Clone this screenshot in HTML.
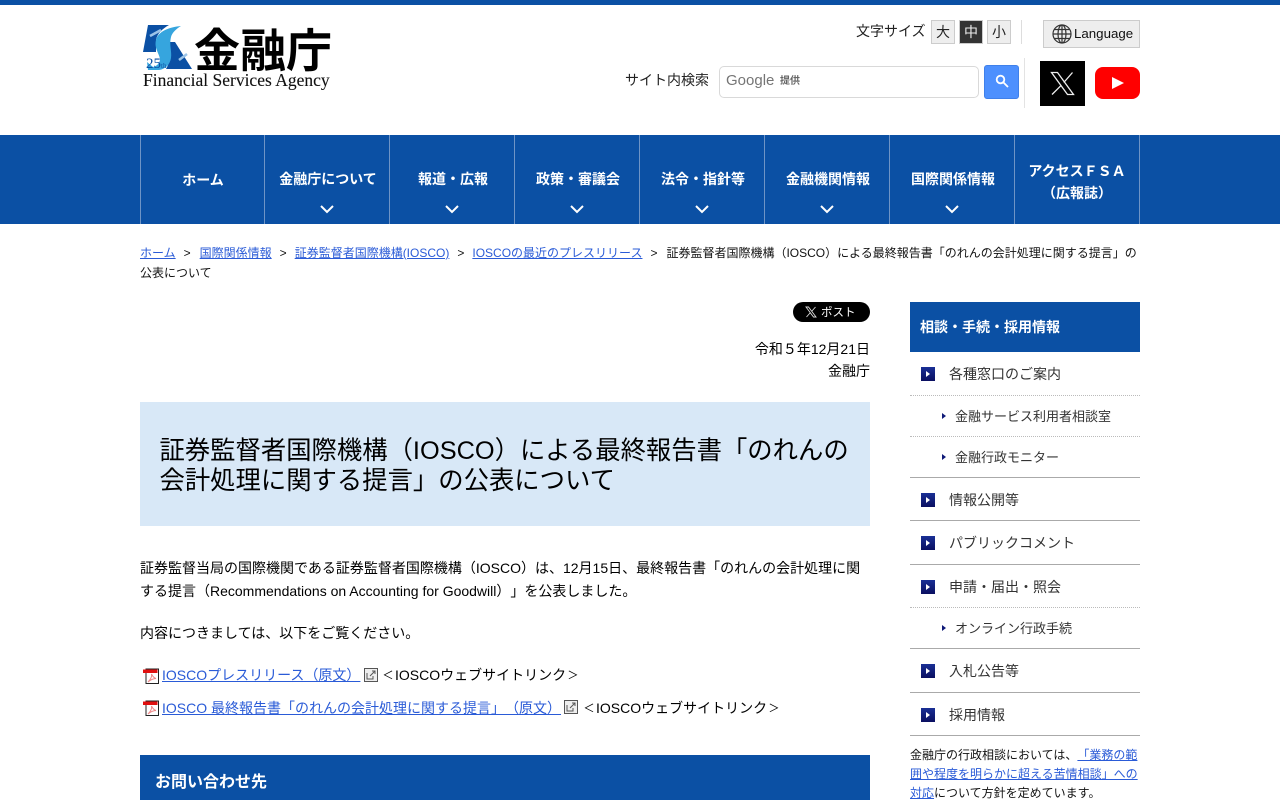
<!DOCTYPE html>
<html lang="ja"><head><meta charset="utf-8"><title>金融庁</title>
<style>
*{box-sizing:border-box}
html,body{margin:0;padding:0;width:1280px;height:800px;overflow:hidden;background:#fff}
body{font-family:"Liberation Sans","Noto Sans CJK JP",sans-serif;font-size:14px;color:#000;position:relative;text-spacing-trim:space-all}
.a{position:absolute;white-space:nowrap}
a{color:#2a5bd7;text-decoration:underline}
.nav{position:absolute;left:0;top:135px;width:1280px;height:89px;background:#0b50a4}
.nv{position:absolute;top:0;height:89px;width:125px;border-left:1px solid #6e94c6;color:#fff;font-weight:bold;font-size:14px;text-align:center}
.nv span{position:absolute;left:1px;right:-1px;top:34px;line-height:20px;white-space:nowrap}
.nv svg{position:absolute;left:55px;top:70px}
.sz{position:absolute;top:20px;width:24px;height:24px;border:1px solid #ccc;background:#eee;text-align:center;line-height:23px;font-size:14px;color:#222}
.side{color:#333;font-size:14px}
.ln{position:absolute;left:910px;width:230px;height:1px}
.sq{position:absolute;left:921px;width:14px;height:14px;background:linear-gradient(#1a2f95,#0a0f60)}
.sq:after{content:"";position:absolute;left:5px;top:4px;border-left:4px solid #fff;border-top:3px solid transparent;border-bottom:3px solid transparent}
.tr{position:absolute;left:942px;border-left:4px solid #101a78;border-top:3px solid transparent;border-bottom:3px solid transparent}
.pdf{position:absolute;left:143px;width:16px;height:16px}
.sep{margin:0 8px}
.nr{display:inline-block;width:14px;text-align:center;transform:scale(.8)}
</style></head><body>
<div class="a" style="left:0;top:0;width:1280px;height:5px;background:#0b50a4"></div>

<svg class="a" style="left:142px;top:25px" width="52" height="46" viewBox="0 0 52 46">
<path d="M6 0H27C20 4 15 9 14 15L14 27H1Z" fill="#0b50a4"/>
<path d="M26 17H33L50 44H24C29 36 29 26 26 17Z" fill="#0b50a4"/>
<path d="M39 1C28 2 16 6 14 15 12 23 17 28 18 34 18 38 15 41 11 42L5 37 6 45H17C24 44 28 39 29 33 30 26 27 20 29 12 30 8 34 4 39 1Z" fill="#36a5de"/>
<path d="M8 11L19 5M37 35L45 29" stroke="#9cc4e8" stroke-width="2.500"/>
<text x="4" y="43" font-family="Liberation Serif" font-size="15" fill="#0b50a4">25</text>
<text x="19" y="43" font-family="Liberation Serif" font-size="7" fill="#0b50a4">th</text>
</svg>
<div class="a" style="left:194px;top:22px;font-size:46px;font-weight:bold;line-height:52px;font-family:'Noto Sans CJK JP',sans-serif">金融庁</div>
<div class="a" style="left:143px;top:70px;font-family:'Liberation Serif',serif;font-size:17.5px;line-height:20px;color:#111;-webkit-text-stroke:.1px #111">Financial Services Agency</div>

<div class="a" style="left:856px;top:21px;line-height:20px;color:#222">文字サイズ</div>
<div class="sz" style="left:931px">大</div>
<div class="sz" style="left:959px;background:#333;color:#eee">中</div>
<div class="sz" style="left:987px">小</div>
<div class="a" style="left:1021px;top:20px;width:1px;height:24px;background:#ddd"></div>
<div class="a" style="left:1043px;top:20px;width:97px;height:28px;border:1px solid #ccc;background:#eee"></div>
<svg class="a" style="left:1052px;top:24px" width="20" height="20" viewBox="0 0 20 20" fill="none" stroke="#333" stroke-width="1.2"><circle cx="10" cy="10" r="9"/><ellipse cx="10" cy="10" rx="4" ry="9"/><path d="M1 10H19M2.200 5.500H17.800M2.200 14.500H17.800M10 1V19"/></svg>
<div class="a" style="left:1074px;top:25px;line-height:18px;font-size:13.300px;color:#111">Language</div>

<div class="a" style="left:625px;top:70px;line-height:20px;color:#222">サイト内検索</div>
<div class="a" style="left:719px;top:66px;width:260px;height:32px;border:1px solid #d9d9d9;border-radius:5px;background:#fff"></div>
<div class="a" style="left:726px;top:71px;font-size:15px;line-height:20px;color:#757575">Google</div>
<div class="a" style="left:780px;top:75px;font-size:10px;line-height:14px;color:#666;font-weight:bold">提供</div>
<div class="a" style="left:984px;top:65px;width:35px;height:34px;background:#4d90fe;border:1px solid #3f80ea;border-radius:3px"></div>
<svg class="a" style="left:995px;top:74px" width="14" height="14" viewBox="0 0 14 14" fill="none" stroke="#fff" stroke-width="1.800"><circle cx="5.500" cy="5.500" r="3.800"/><path d="M8.500 8.500L13 13"/></svg>
<div class="a" style="left:1024px;top:58px;width:1px;height:50px;background:#e3e3e3"></div>
<div class="a" style="left:1040px;top:61px;width:45px;height:45px;background:#000"></div>
<svg class="a" style="left:1050px;top:71px" width="25" height="25" viewBox="0 0 25 25" fill="none" stroke="#eee" stroke-width="1.300"><path d="M1.500 1.500H7.500L23.500 23.500H17.500ZM22.500 1.500L13.800 11.500M11 14.600L2 23.500"/></svg>
<svg class="a" style="left:1095px;top:67px" width="45" height="32" viewBox="0 0 45 32"><rect width="45" height="32" rx="8" fill="#f00"/><path d="M17 10L29 16 17 22Z" fill="#fff"/></svg>

<div class="nav"></div>
<div class="nv" style="left:140px;top:135px"><span style="top:35px;left:0;right:0">ホーム</span></div>
<div class="nv" style="left:264px;top:135px"><span>金融庁について</span><svg width="14" height="9" viewBox="0 0 14 9" fill="none" stroke="#fff" stroke-width="2"><path d="M1 1L7 7 13 1"/></svg></div>
<div class="nv" style="left:389px;top:135px"><span>報道・広報</span><svg width="14" height="9" viewBox="0 0 14 9" fill="none" stroke="#fff" stroke-width="2"><path d="M1 1L7 7 13 1"/></svg></div>
<div class="nv" style="left:514px;top:135px"><span>政策・審議会</span><svg width="14" height="9" viewBox="0 0 14 9" fill="none" stroke="#fff" stroke-width="2"><path d="M1 1L7 7 13 1"/></svg></div>
<div class="nv" style="left:639px;top:135px"><span>法令・指針等</span><svg width="14" height="9" viewBox="0 0 14 9" fill="none" stroke="#fff" stroke-width="2"><path d="M1 1L7 7 13 1"/></svg></div>
<div class="nv" style="left:764px;top:135px"><span>金融機関情報</span><svg width="14" height="9" viewBox="0 0 14 9" fill="none" stroke="#fff" stroke-width="2"><path d="M1 1L7 7 13 1"/></svg></div>
<div class="nv" style="left:889px;top:135px"><span>国際関係情報</span><svg width="14" height="9" viewBox="0 0 14 9" fill="none" stroke="#fff" stroke-width="2"><path d="M1 1L7 7 13 1"/></svg></div>
<div class="nv" style="left:1014px;top:135px;width:126px;border-right:1px solid #6e94c6"><span style="top:25px;line-height:22px;left:0;right:0">アクセスＦＳＡ<br>（広報誌）</span></div>

<div class="a" style="left:140px;top:243px;width:1000px;white-space:normal;font-size:12px;line-height:20px;color:#111"><a href="#">ホーム</a><span class="sep" style="margin-right:9px">&gt;</span><a href="#">国際関係情報</a><span class="sep">&gt;</span><a href="#">証券監督者国際機構(IOSCO)</a><span class="sep">&gt;</span><a href="#">IOSCOの最近のプレスリリース</a><span class="sep" style="margin-right:9px">&gt;</span>証券監督者国際機構（IOSCO）による最終報告書「のれんの会計処理に関する提言」の公表について</div>

<div class="a" style="left:793px;top:302px;width:77px;height:20px;border-radius:10px;background:#000"></div>
<svg class="a" style="left:805px;top:306px" width="12" height="12" viewBox="0 0 12 12" fill="none" stroke="#ddd" stroke-width=".9"><path d="M1 1H3.500L11 11H8.500ZM10.500 1L6.500 5.500M5 7L1.500 11"/></svg>
<div class="a" style="left:821px;top:303px;color:#fff;font-size:11.500px;line-height:20px">ポスト</div>
<div class="a" style="left:570px;top:338px;width:300px;text-align:right;line-height:22px">令和５年12月21日<br>金融庁</div>

<div class="a" style="left:140px;top:402px;width:730px;height:124px;background:#d8e8f7"></div>
<div class="a" style="left:159.500px;top:436px;width:700px;white-space:normal;font-size:25.350px;line-height:30px">証券監督者国際機構（IOSCO）による最終報告書「のれんの会計処理に関する提言」の公表について</div>

<div class="a" style="left:140px;top:556.500px;width:730px;white-space:normal;line-height:23px">証券監督当局の国際機関である証券監督者国際機構（IOSCO）は、12月15日、最終報告書「のれんの会計処理に関する提言（Recommendations on Accounting for Goodwill）」を公表しました。</div>
<div class="a" style="left:140px;top:622px;line-height:23px">内容につきましては、以下をご覧ください。</div>

<svg class="pdf" style="top:668px" viewBox="0 0 16 16"><path d="M3 1H15.500V15.500H3Z" fill="#fff" stroke="#222"/><rect x="0" y="1.500" width="14.500" height="3.500" fill="#e01010"/><path d="M5 14C8 11 9 8 8.500 6 10 9 11 10 13 10.500 10 10.500 8 11.500 5 14Z" fill="none" stroke="#e88" stroke-width="1"/></svg>
<div class="a" style="left:162px;top:664px;line-height:22px"><a href="#">IOSCOプレスリリース（原文）</a></div>
<svg class="a" style="left:364px;top:668px" width="14" height="14" viewBox="0 0 14 14" fill="none" stroke="#555"><rect x=".5" y=".5" width="13" height="13" fill="#eee"/><path d="M3 5V11H9V8M6 8L11 3M8 3H11V6"/></svg>
<div class="a" style="left:381px;top:664px;line-height:22px"><span class="nr">＜</span>IOSCOウェブサイトリンク<span class="nr">＞</span></div>

<svg class="pdf" style="top:700px" viewBox="0 0 16 16"><path d="M3 1H15.500V15.500H3Z" fill="#fff" stroke="#222"/><rect x="0" y="1.500" width="14.500" height="3.500" fill="#e01010"/><path d="M5 14C8 11 9 8 8.500 6 10 9 11 10 13 10.500 10 10.500 8 11.500 5 14Z" fill="none" stroke="#e88" stroke-width="1"/></svg>
<div class="a" style="left:162px;top:697px;line-height:22px"><a href="#">IOSCO 最終報告書「のれんの会計処理に関する提言」（原文）</a></div>
<svg class="a" style="left:564px;top:700px" width="14" height="14" viewBox="0 0 14 14" fill="none" stroke="#555"><rect x=".5" y=".5" width="13" height="13" fill="#eee"/><path d="M3 5V11H9V8M6 8L11 3M8 3H11V6"/></svg>
<div class="a" style="left:582px;top:697px;line-height:22px"><span class="nr">＜</span>IOSCOウェブサイトリンク<span class="nr">＞</span></div>

<div class="a" style="left:140px;top:755px;width:730px;height:45px;background:#0b50a4;color:#fff;font-weight:bold;font-size:16px;line-height:55px;padding-left:15px;overflow:hidden">お問い合わせ先</div>

<div class="a" style="left:910px;top:302px;width:230px;height:50px;background:#0b50a4;color:#fff;font-weight:bold;font-size:14px;line-height:51px;padding-left:10px">相談・手続・採用情報</div>

<div class="sq" style="top:367px"></div><div class="a side" style="left:949px;top:363.500px;line-height:20px">各種窓口のご案内</div>
<div class="ln" style="top:395px;border-top:1px dotted #bbb"></div>
<div class="tr" style="top:413px"></div><div class="a side" style="left:955px;top:406.500px;line-height:20px;font-size:13px">金融サービス利用者相談室</div>
<div class="ln" style="top:436px;border-top:1px dotted #bbb"></div>
<div class="tr" style="top:454px"></div><div class="a side" style="left:955px;top:447.500px;line-height:20px;font-size:13px">金融行政モニター</div>
<div class="ln" style="top:477px;background:#aaa"></div>
<div class="sq" style="top:493px"></div><div class="a side" style="left:949px;top:489.500px;line-height:20px">情報公開等</div>
<div class="ln" style="top:520px;background:#aaa"></div>
<div class="sq" style="top:536px"></div><div class="a side" style="left:949px;top:532.500px;line-height:20px">パブリックコメント</div>
<div class="ln" style="top:564px;background:#aaa"></div>
<div class="sq" style="top:580px"></div><div class="a side" style="left:949px;top:576.500px;line-height:20px">申請・届出・照会</div>
<div class="ln" style="top:607px;border-top:1px dotted #bbb"></div>
<div class="tr" style="top:625px"></div><div class="a side" style="left:955px;top:618.500px;line-height:20px;font-size:13px">オンライン行政手続</div>
<div class="ln" style="top:648px;background:#aaa"></div>
<div class="sq" style="top:664px"></div><div class="a side" style="left:949px;top:660.500px;line-height:20px">入札公告等</div>
<div class="ln" style="top:692px;background:#aaa"></div>
<div class="sq" style="top:708px"></div><div class="a side" style="left:949px;top:704.500px;line-height:20px">採用情報</div>
<div class="ln" style="top:735px;background:#aaa"></div>
<div class="a" style="left:910px;top:746px;width:230px;white-space:normal;font-size:12px;line-height:19px;color:#111">金融庁の行政相談においては、<a href="#">「業務の範囲や程度を明らかに超える苦情相談」への対応</a>について方針を定めています。</div>
</body></html>
